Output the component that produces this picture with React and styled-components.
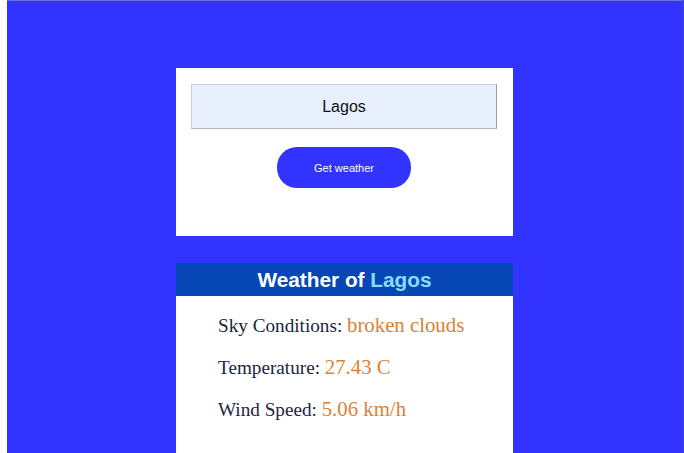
import React, { useState } from "react";
import styled, { createGlobalStyle } from "styled-components";

const GlobalStyle = createGlobalStyle`
  html, body {
    margin: 0;
    padding: 0;
    background: #ffffff;
    overflow: hidden;
  }
`;

const Page = styled.div`
  margin-left: 7px;
  width: 677px;
  height: 453px;
  border-top: 1px solid #6b6bdc;
  border-right: 3px solid #3a3ae6;
  background: #3333ff;
  display: flex;
  flex-direction: column;
  align-items: center;
  padding: 67px 0 0 1px;
  box-sizing: border-box;
  overflow: hidden;
`;

const SearchCard = styled.div`
  width: 337px;
  background: #ffffff;
  padding: 16px 16px 48px 15px;
  box-sizing: border-box;
  display: flex;
  flex-direction: column;
  align-items: center;
  gap: 18px;
`;

const CityInput = styled.input`
  width: 306px;
  height: 45px;
  box-sizing: border-box;
  background: #e8f0fe;
  border: 1px solid #c9cdd4;
  border-right-color: #9a9ea6;
  border-bottom-color: #b4b8c0;
  font-family: "Liberation Sans", Arial, sans-serif;
  font-size: 16px;
  color: #111111;
  text-align: center;
  outline: none;
  padding: 1px 0 0;
`;

const Button = styled.button`
  width: 134px;
  height: 41px;
  border: none;
  border-radius: 20px;
  background: #3333ff;
  color: #ffffff;
  font-family: "Liberation Sans", Arial, sans-serif;
  font-size: 11px;
  cursor: pointer;
`;

const ResultCard = styled.div`
  margin-top: 27px;
  width: 337px;
  background: #ffffff;
  padding-bottom: 60px;
  flex-shrink: 0;
`;

const Header = styled.h3`
  margin: 0;
  height: 33px;
  background: #0747b5;
  color: #ffffff;
  font-family: "Liberation Sans", Arial, sans-serif;
  font-weight: bold;
  font-size: 20.8px;
  line-height: 34px;
  text-align: center;
`;

const City = styled.span`
  color: #86dcfb;
`;

const Details = styled.div`
  padding: 8px 0 0 42px;
`;

const Row = styled.p`
  margin: 0;
  font-family: "Liberation Serif", "Times New Roman", serif;
  font-size: 19.2px;
  line-height: 41px;
  color: #1b2540;
`;

const Value = styled.span`
  font-size: 20.8px;
  color: #e07f36;
`;

export default function App() {
  const [city, setCity] = useState("Lagos");
  return (
    <>
      <GlobalStyle />
      <Page>
        <SearchCard>
          <CityInput value={city} onChange={e => setCity(e.target.value)} />
          <Button>Get weather</Button>
        </SearchCard>
        <ResultCard>
          <Header>
            Weather of <City>Lagos</City>
          </Header>
          <Details>
            <Row>
              Sky Conditions: <Value>broken clouds</Value>
            </Row>
            <Row>
              Temperature: <Value>27.43 C</Value>
            </Row>
            <Row>
              Wind Speed: <Value>5.06 km/h</Value>
            </Row>
          </Details>
        </ResultCard>
      </Page>
    </>
  );
}
